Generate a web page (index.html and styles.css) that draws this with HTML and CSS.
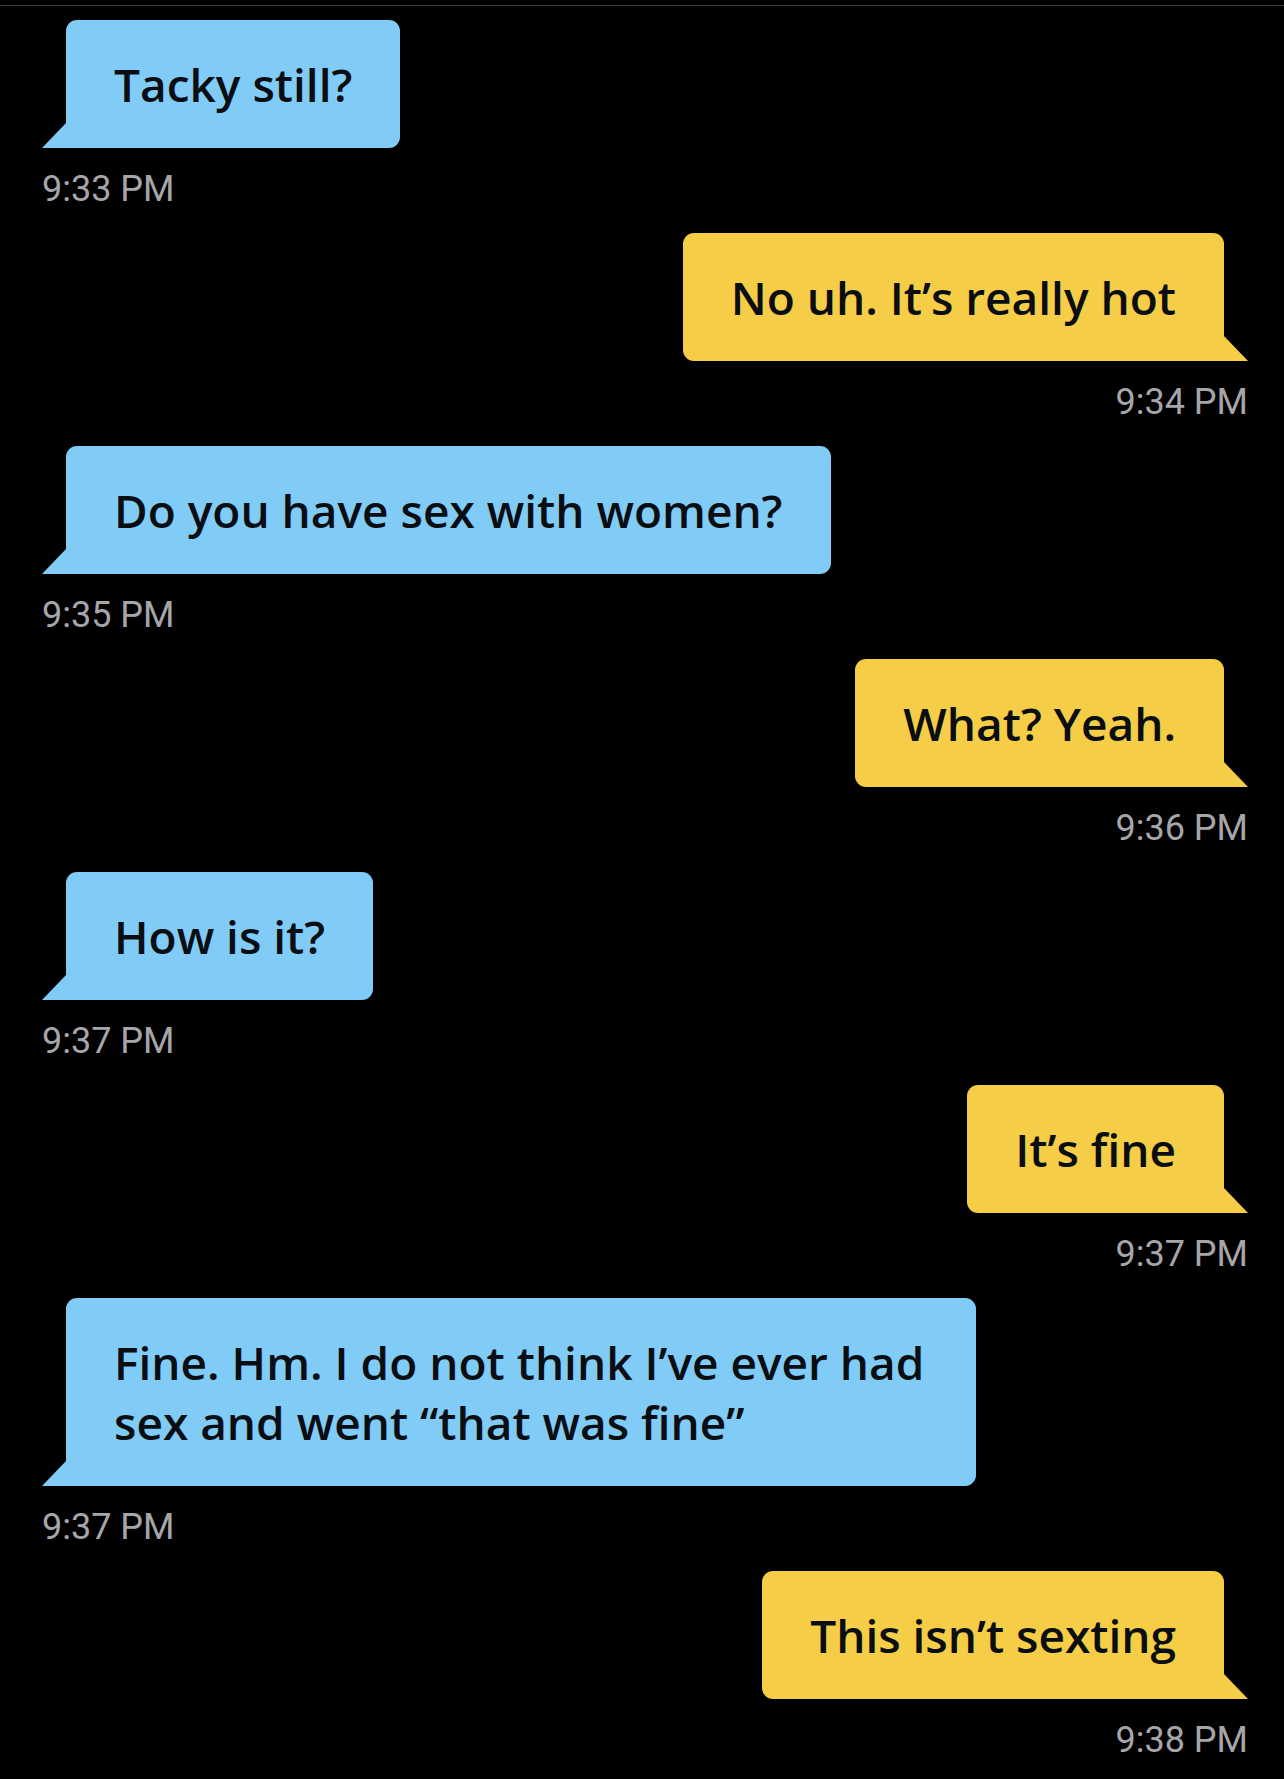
FILE: index.html
```html
<!DOCTYPE html>
<html lang="en">
<head>
<meta charset="utf-8">
<title>Chat</title>
<link rel="stylesheet" href="styles.css">
</head>
<body>
<div class="topline"></div>
<div class="chat">
  <div class="msg in"><div class="bubble">Tacky still?</div><div class="time">9:33 PM</div></div>
  <div class="msg out"><div class="bubble">No uh. It’s really hot</div><div class="time">9:34 PM</div></div>
  <div class="msg in"><div class="bubble">Do you have sex with women?</div><div class="time">9:35 PM</div></div>
  <div class="msg out"><div class="bubble">What? Yeah.</div><div class="time">9:36 PM</div></div>
  <div class="msg in"><div class="bubble">How is it?</div><div class="time">9:37 PM</div></div>
  <div class="msg out"><div class="bubble">It’s fine</div><div class="time">9:37 PM</div></div>
  <div class="msg in"><div class="bubble">Fine. Hm. I do not think I’ve ever had sex and went “that was fine”</div><div class="time">9:37 PM</div></div>
  <div class="msg out"><div class="bubble">This isn’t sexting</div><div class="time">9:38 PM</div></div>
</div>
</body>
</html>
```
FILE: styles.css
```css
html, body {
  margin: 0;
  background: #000;
}
.topline {
  height: 1px;
  margin-top: 5px;
  background: #3a3a3a;
}
.chat {
  display: flex;
  flex-direction: column;
  gap: 24px;
  padding: 14px 36px 0 42px;
}
.msg {
  display: flex;
  flex-direction: column;
}
.msg.in { align-items: flex-start; }
.msg.out { align-items: flex-end; }
.bubble {
  position: relative;
  box-sizing: border-box;
  max-width: 910px;
  padding: 34px 48px;
  font-family: "Open Sans", "Noto Sans", sans-serif;
  font-weight: 600;
  font-size: 46px;
  line-height: 60px;
  color: #0a0e12;
  border-radius: 11px;
}
.in .bubble {
  background: #80ccf7;
  margin-left: 24px;
  border-bottom-left-radius: 0;
}
.out .bubble {
  background: #f5cd47;
  margin-right: 24px;
  border-bottom-right-radius: 0;
}
.in .bubble::before {
  content: "";
  position: absolute;
  left: -24px;
  bottom: 0;
  width: 0;
  height: 0;
  border-style: solid;
  border-width: 0 0 25px 24px;
  border-color: transparent transparent #80ccf7 transparent;
}
.out .bubble::after {
  content: "";
  position: absolute;
  right: -24px;
  bottom: 0;
  width: 0;
  height: 0;
  border-style: solid;
  border-width: 0 24px 25px 0;
  border-color: transparent transparent #f5cd47 transparent;
}
.time {
  margin-top: 21px;
  font-family: Roboto, "Liberation Sans", sans-serif;
  font-size: 36px;
  line-height: 40px;
  color: #a6a6a9;
}
```
